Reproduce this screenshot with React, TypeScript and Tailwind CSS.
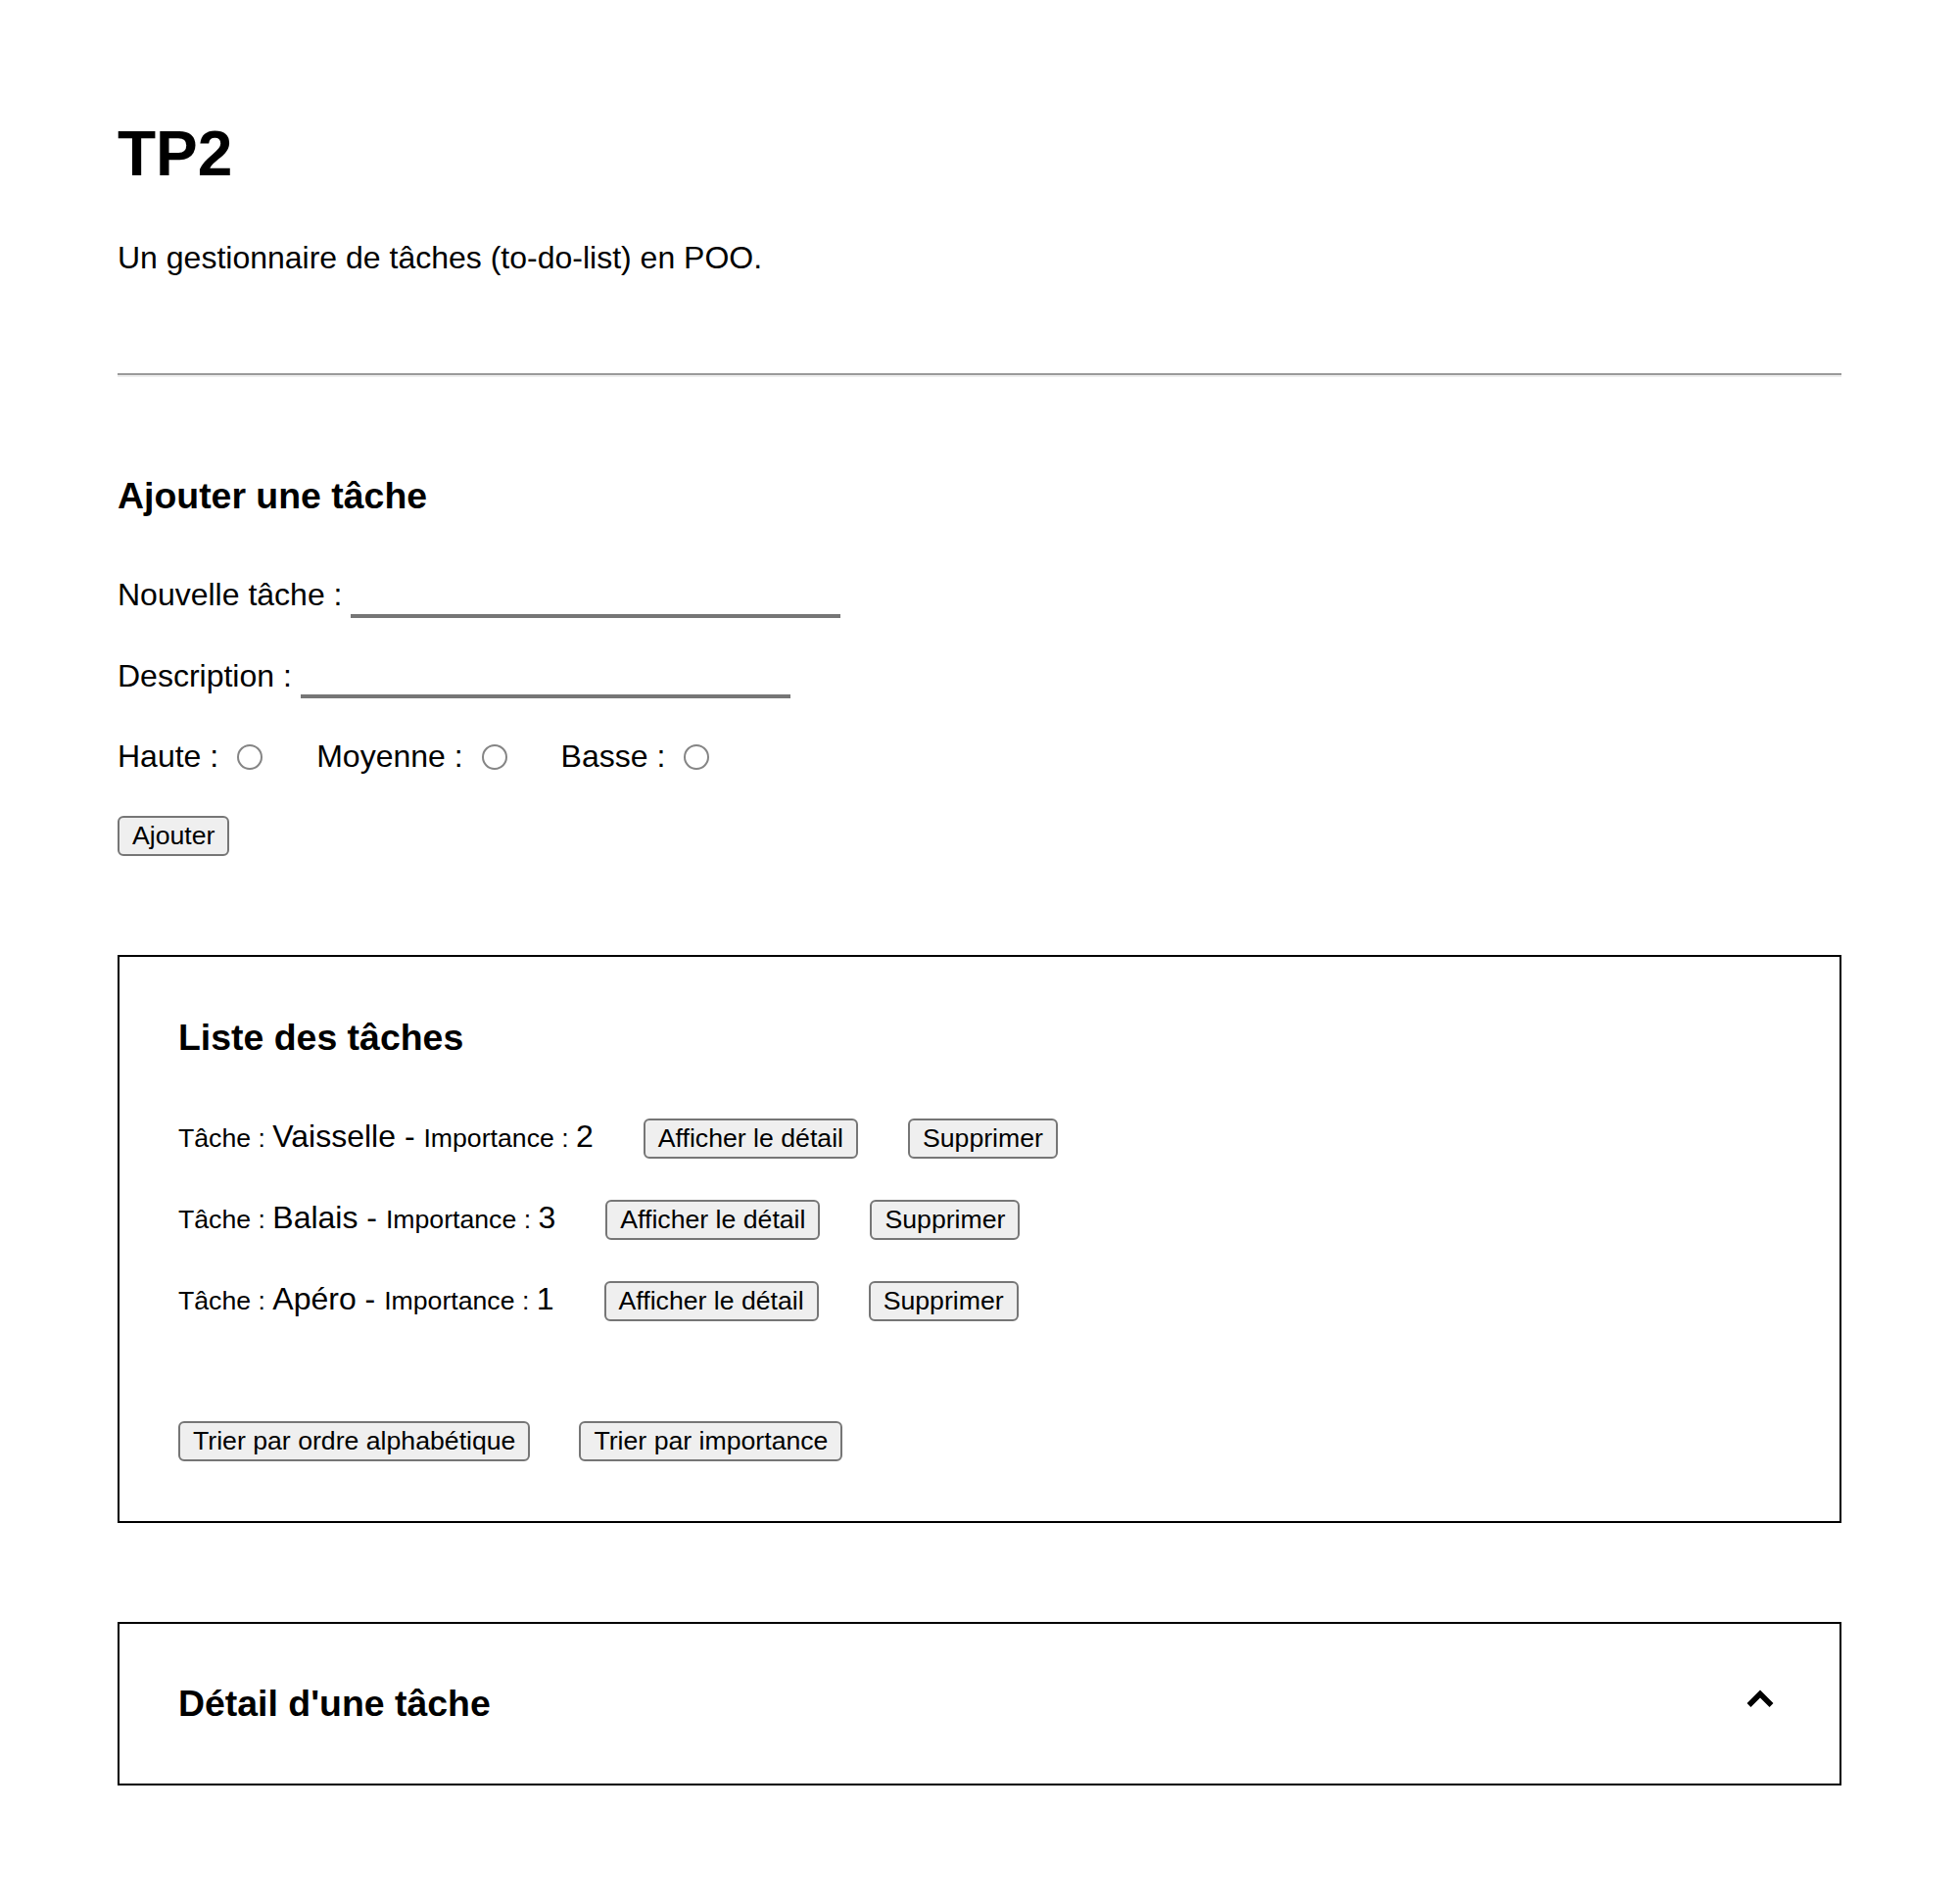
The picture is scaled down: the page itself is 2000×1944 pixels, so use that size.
import React from "react";

const btn =
  "inline-block bg-[#efefef] border-2 border-[#767676] rounded-[6px] px-[13px] py-[3px] text-[26.67px] leading-[31px] text-black";

function Radio() {
  return (
    <span className="inline-block align-[-3px] ml-[19px] w-[26px] h-[26px] rounded-full border-2 border-[#858585] bg-white"></span>
  );
}

function TaskRow({ name, imp }: { name: string; imp: number }) {
  return (
    <div className="flex items-baseline">
      <span className="text-[32px] leading-[37px] whitespace-pre">
        <span className="text-[26.67px]">Tâche : </span>
        {name} - <span className="text-[26.67px]">Importance : </span>
        {imp}
      </span>
      <button className={btn + " ml-[51px]"}>Afficher le détail</button>
      <button className={btn + " ml-[51px]"}>Supprimer</button>
    </div>
  );
}

export default function App() {
  return (
    <div className="min-h-[1944px] bg-white text-black font-['Liberation_Sans',Arial,Helvetica,sans-serif] px-[120px] pt-[120px] pb-[120px]">
      <h1 className="text-[64px] font-bold leading-[74px]">TP2</h1>
      <p className="mt-[51px] text-[32px] leading-[37px]">
        Un gestionnaire de tâches (to-do-list) en POO.
      </p>
      <hr className="mt-[99px] h-0 border-t-2 border-b-2 border-t-[#9a9a9a] border-b-[#eeeeee]" />

      <h3 className="mt-[100px] text-[37.44px] font-bold leading-[43px]">
        Ajouter une tâche
      </h3>

      <div className="mt-[61px] text-[32px] leading-[37px] whitespace-pre">
        Nouvelle tâche :{" "}
        <input
          type="text"
          className="inline-block align-baseline w-[500px] h-[38px] px-[4px] py-[2px] border-b-4 border-[#767676] text-[26.67px] outline-none bg-transparent"
        />
      </div>
      <div className="mt-[41px] text-[32px] leading-[37px] whitespace-pre">
        Description :{" "}
        <input
          type="text"
          className="inline-block align-baseline w-[500px] h-[38px] px-[4px] py-[2px] border-b-4 border-[#767676] text-[26.67px] outline-none bg-transparent"
        />
      </div>
      <div className="mt-[41px] text-[32px] leading-[37px] whitespace-pre">
        <span>Haute :</span>
        <Radio />
        <span className="ml-[55px]">Moyenne :</span>
        <Radio />
        <span className="ml-[55px]">Basse :</span>
        <Radio />
      </div>
      <div className="mt-[42px] flex">
        <button className={btn}>Ajouter</button>
      </div>

      <section className="mt-[101px] border-2 border-black px-[60px] pt-[61px] pb-[61px]">
        <h3 className="text-[37.44px] font-bold leading-[43px]">Liste des tâches</h3>
        <div className="mt-[61px] flex flex-col gap-[42px]">
          <TaskRow name="Vaisselle" imp={2} />
          <TaskRow name="Balais" imp={3} />
          <TaskRow name="Apéro" imp={1} />
        </div>
        <div className="mt-[102px] flex gap-[50px]">
          <button className={btn}>Trier par ordre alphabétique</button>
          <button className={btn}>Trier par importance</button>
        </div>
      </section>

      <section className="mt-[101px] border-2 border-black px-[60px] py-[60px] flex items-center justify-between">
        <h3 className="text-[37.44px] font-bold leading-[43px]">Détail d'une tâche</h3>
        <svg
          width="30"
          height="20"
          viewBox="0 0 30 20"
          className="mr-[6px] mb-[12px]"
        >
          <polyline
            points="3.5,17 15,5.5 26.5,17"
            fill="none"
            stroke="black"
            strokeWidth="5.5"
            strokeLinejoin="miter"
            strokeLinecap="butt"
          />
        </svg>
      </section>
    </div>
  );
}
